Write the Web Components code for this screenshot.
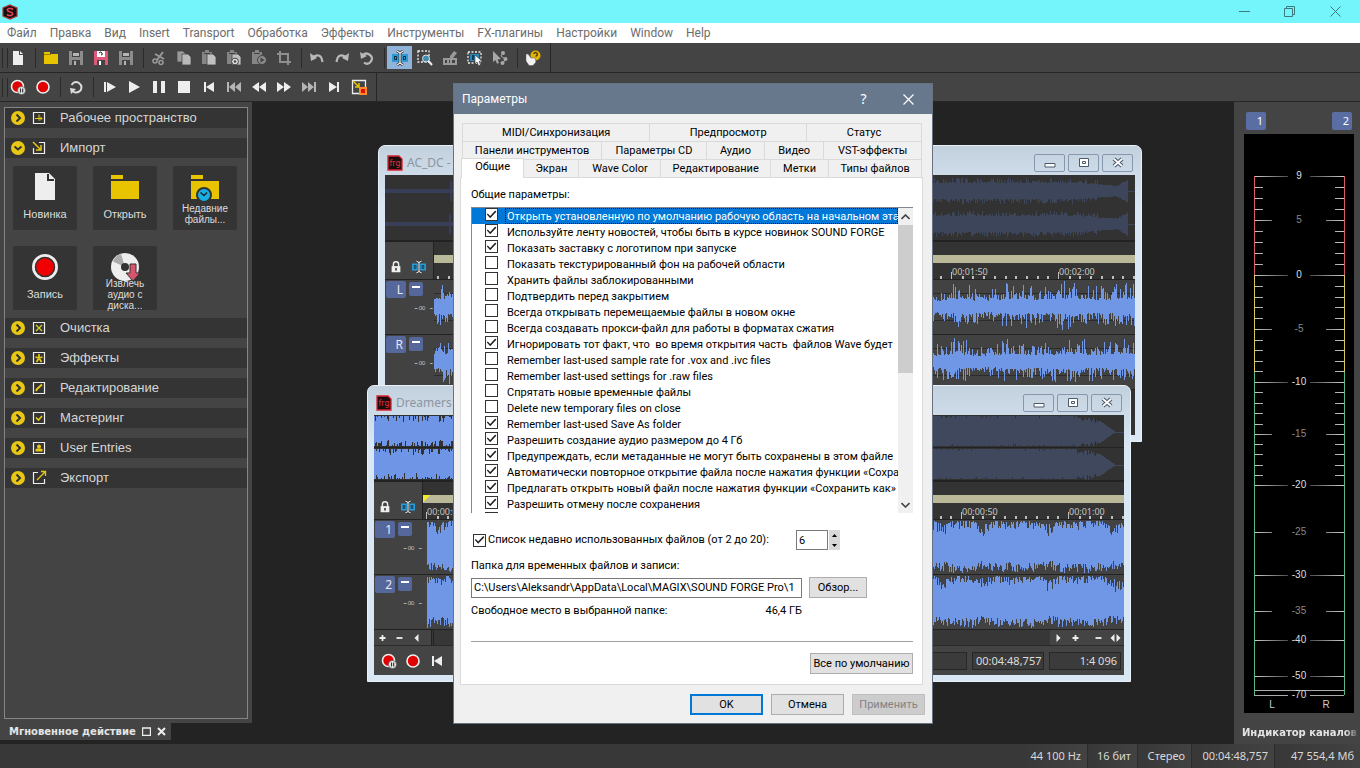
<!DOCTYPE html>
<html lang="ru">
<head>
<meta charset="utf-8">
<title>SOUND FORGE Pro</title>
<style>
  html, body { height: 100%; margin: 0; }
  body { background: #232323; font: 11px/16px "Noto Sans", "Open Sans", sans-serif; overflow: hidden; }
</style>
</head>
<body>
<sf-app></sf-app>
<script>
const UI = '"Noto Sans", "Open Sans", sans-serif';
const DLG = 'Roboto, "Noto Sans", sans-serif';

/* 16x16 glyphs */
const rec = '<circle cx="8" cy="8" r="6" fill="#e00000" stroke="#eee" stroke-width="1.6"/>';
const floppy = (c, d) => `<path fill="${c}" d="M1 1h14v14H1z"/><path fill="#444" d="M4 1h8v6H4zM4 10h8v5H4z"/><path fill="${d}" d="M6 11h2v4H6zM5 3h6v3H5z"/>`;
const sheet = (x, y, c) => `<path fill="${c}" stroke="#444" stroke-width=".8" d="M${x} ${y}h6l3 3v8h-9z"/>`;
const clip = '<path fill="#858585" d="M1 2h3V0h4v2h3v12H1z"/><path fill="#444" d="M3 3h6v1H3z"/>';
const tag = '<path fill="#2b9bd6" d="M0 4h16v8H0z"/><path fill="#10344a" d="M2 6h3v4H2zM11 6h3v4h-3z"/><path fill="#2b9bd6" d="M3 7h1v2H3zM12 7h1v2h-1z"/><path d="M5 1l3 2 3-2M8 2v12M5 15l3-2 3 2" fill="none" stroke="#222" stroke-width="2.6"/><path d="M5 1l3 2 3-2M8 2v12M5 15l3-2 3 2" fill="none" stroke="#f2f2f2" stroke-width="1.3"/>';
const ICONS = {
  app: '<path fill="#141013" stroke="#b33030" stroke-width="1.2" d="M8 1l7 3v8l-7 3-7-3V4z"/><path fill="none" stroke="#e8434c" stroke-width="1.6" d="M11 5.500L9.500 4.500H6.500L5.300 5.700l.7 1.500 4 1.400.7 1.500-1.300 1.400H6.500L5 10.500"/>',
  file: '<path fill="#eee" d="M3 1h7l3 3v11H3z"/><path fill="#444" d="M9 1v4h4V4h-3V1z"/>',
  folder: '<path fill="#e8c400" d="M1 2h6v2h8v10H1z"/><path fill="#9b8300" d="M1 4h7v1H1z"/>',
  save: floppy('#8c8c8c', '#b5b5b5'),
  saveas: floppy('#e0587a', '#fff') + '<path fill="#fff" d="M4 1h8v6H4z"/><path d="M6 3q2-2 3 0t-1 2" fill="none" stroke="#222"/>',
  cut: '<path d="M12 2L6 10M4 4l9 5" stroke="#999" stroke-width="2" fill="none"/><circle cx="4" cy="11" r="2" fill="none" stroke="#999" stroke-width="1.6"/><circle cx="10" cy="12.500" r="2" fill="none" stroke="#999" stroke-width="1.600"/>',
  copy: sheet(1, 1, '#9a9a9a') + sheet(6, 4, '#b9b9b9'),
  paste: clip + sheet(6, 4, '#c0c0c0'),
  pastenew: clip + sheet(6, 4, '#c0c0c0') + '<circle cx="9" cy="11.500" r="3.400" fill="#ddd" stroke="#444"/><circle cx="9" cy="11.500" r="1.200" fill="#444"/>',
  pastemix: clip + '<circle cx="11" cy="10" r="4.500" fill="#8a8a8a" stroke="#444"/><path fill="#444" d="M9.500 7.500l4 2.500-4 2.500z"/>',
  crop: '<path d="M4 1v11h11M1 4h11v11" fill="none" stroke="#8f8f8f" stroke-width="2"/>',
  undo: '<path d="M4 7q8-5 9.500 5" fill="none" stroke="#b9b9b9" stroke-width="2.200"/><path fill="#b9b9b9" d="M1 3l1 8 6-3z"/>',
  redo: '<path d="M12 7Q4 2 2.500 12" fill="none" stroke="#b9b9b9" stroke-width="2.200"/><path fill="#b9b9b9" d="M15 3l-1 8-6-3z"/>',
  again: '<path d="M4 5q3-3 7 0t0 7.500q-3 2.500-6 0" fill="none" stroke="#b9b9b9" stroke-width="2.200"/><path fill="#b9b9b9" d="M1 2l1 7 6-3z"/>',
  edit: tag,
  zoom: '<path d="M1 1h11v11H1z" fill="none" stroke="#eee" stroke-width="1.300" stroke-dasharray="2 1.500"/><circle cx="9" cy="8.500" r="3.500" fill="#3f8fb5" stroke="#ddd"/><path d="M11.500 11l3.500 4" stroke="#eee" stroke-width="2"/>',
  pencil: '<path fill="#999" d="M1 8h14v7H1zM8 6l4-5 3 2-4 5-3 1z"/><path fill="#444" d="M3 10h2v3H3zM7 10h1v3H7zM10 10h3v3h-3z"/>',
  event: '<path d="M1 2h13v11H1z" fill="none" stroke="#eee" stroke-width="1.300" stroke-dasharray="2 1.500"/><path fill="#2c86b4" d="M3 4h9v7H3z"/><path fill="#173c52" d="M5 5h2v5H5z"/><path fill="#fff" stroke="#333" stroke-width=".6" d="M8 5l7 6-3 .4 1.500 3.600-2 .8L10 12l-2 2z"/>',
  env: '<path fill="#a8a8a8" d="M1 1l8 8-3.500.4L7 13l-2 .8L3.500 10 1 12z"/><path d="M11 3l-2 3 4 3-2 5" stroke="#a8a8a8" fill="none"/><circle cx="11" cy="3" r="2" fill="#a8a8a8"/><circle cx="13.500" cy="9" r="2" fill="#a8a8a8"/><circle cx="10.500" cy="13" r="2" fill="#a8a8a8"/>',
  help: '<circle cx="10.500" cy="5.500" r="5" fill="#e3b500"/><path d="M8.500 4q2-3 4 0-.5 2-2 2.500" fill="none" stroke="#4a3a00" stroke-width="1.300"/><path fill="#f2f2f2" stroke="#555" stroke-width=".5" d="M1 4l2 0 3 4 4 0 1 4-3 3.500H4L1 11z"/>',
  recpause: '<circle cx="7.500" cy="7.500" r="6" fill="#e00000" stroke="#eee" stroke-width="1.600"/><circle cx="11.500" cy="11.500" r="4" fill="#eee" stroke="#444" stroke-width=".6"/><path d="M10.500 9.500v4M12.700 9.500v4" stroke="#333" stroke-width="1.200"/>',
  record: rec,
  loop: '<path d="M5 12.500Q9 15 12.500 11.500 15 7 11 4 6.500 1.500 3.500 6" fill="none" stroke="#ddd" stroke-width="1.900"/><path fill="#ddd" d="M2 9l6 1-5 5z"/>',
  playall: '<path fill="#eee" d="M3 3h2v10H3zM6 3l9 5-9 5z"/>',
  play: '<path fill="#eee" d="M3 2l11 6-11 6z"/>',
  pause: '<path fill="#eee" d="M2 2h4v12H2zM10 2h4v12h-4z"/>',
  stop: '<path fill="#eee" d="M2 2h12v12H2z"/>',
  start: '<path fill="#eee" d="M3 3h2v10H3zM13 3v10L5 8z"/>',
  prev: '<path fill="#b5b5b5" d="M1 3h2v10H1zM9 3v10L3 8zM15 3v10L9 8z"/>',
  rew: '<path fill="#eee" d="M8 3v10L1 8zM15 3v10L8 8z"/>',
  ff: '<path fill="#eee" d="M1 3v10l7-5zM8 3v10l7-5z"/>',
  next: '<path fill="#b5b5b5" d="M1 3v10l6-5zM7 3v10l6-5zM13 3h2v10h-2z"/>',
  end: '<path fill="#eee" d="M3 3v10l8-5zM11 3h2v10h-2z"/>',
  goto: '<path d="M1.500 1.500h13v13h-13z" fill="none" stroke="#eee" stroke-width="1.300"/><path fill="#ff8c2a" d="M8 8h8v8H8z"/><path fill="#e01010" d="M10 10h4v4h-4z"/><path d="M2 2l6 6M8 4v4H4" fill="none" stroke="#e8c400" stroke-width="1.500"/>',
  right: '<circle cx="8" cy="8" r="7" fill="#e8c814"/><path d="M6.500 4.500L10 8l-3.500 3.500" fill="none" stroke="#333" stroke-width="2"/>',
  down: '<circle cx="8" cy="8" r="7" fill="#e8c814"/><path d="M4.500 6.500L8 9.500l3.500-3" fill="none" stroke="#333" stroke-width="2"/>',
  lock: '<path fill="#eee" d="M3 7h10v7H3z"/><path d="M5 8V5q0-3 3-3t3 3v3" fill="none" stroke="#eee" stroke-width="1.600"/><path fill="#444" d="M7 9h2v3H7z"/>',
  frg: '<path fill="#1a0c0c" stroke="#d8232f" stroke-width="1.300" d="M1 1h11l3 3v11H1z"/><text x="8" y="11" text-anchor="middle" font-family="DejaVu Sans, sans-serif" font-size="8" fill="#e03038">frg</text>',
  min: '<path fill="#fff" stroke="#4d5a6c" d="M3 8.500h10v3.500H3z"/>',
  max: '<path fill="#fff" stroke="#4d5a6c" d="M3.500 3.500h9v8h-9zM6.500 6.500h3v2h-3z"/>',
  x: '<path d="M4 4l8 7M12 4l-8 7" stroke="#4d5a6c" stroke-width="4"/><path d="M4 4l8 7M12 4l-8 7" stroke="#fff" stroke-width="1.800"/>',
  plus: '<path d="M8 5v6M5 8h6" stroke="#eee" stroke-width="1.800"/>',
  minus: '<path d="M5 8h6" stroke="#eee" stroke-width="1.800"/>',
  tril: '<path fill="#eee" d="M10 4v8L6 8z"/>',
  trir: '<path fill="#eee" d="M6 4v8l4-4z"/>',
  trilr: '<path fill="#eee" d="M7 4v8L3 8zM9 4v8l4-4z"/>',
};
const box = '<path d="M2.500 2.500h11v11h-11z" fill="none" stroke="#eee" stroke-width="1.200"/>';
Object.assign(ICONS, {
  gWork: box + '<path d="M8 4.500v6M4 8.500h7M9 6.500l2 2-2 2" fill="none" stroke="#e8c814"/>',
  gImport: '<path d="M8 2.500h5.500v11h-11V8" fill="none" stroke="#eee" stroke-width="1.200"/><path d="M2 2l8 8M10 5v5H5" fill="none" stroke="#e8c814" stroke-width="1.500"/>',
  gClean: box + '<path d="M5 5l6 6M11 5l-6 6" stroke="#d5cf2a" stroke-width="1.300"/>',
  gFx: box + '<path d="M8 4v4M4.500 7L8 8l3.500-1M5.500 12L8 8l2.500 4" stroke="#e8c814" stroke-width="1.700" fill="none"/>',
  gEdit: box + '<path d="M5 11l1-2 5-4.500" stroke="#e8c814" stroke-width="2" fill="none"/>',
  gMaster: box + '<path d="M5 7.500L7.500 10 11 6" stroke="#e8c814" stroke-width="1.600" fill="none"/>',
  gUser: box + '<circle cx="8" cy="6.500" r="2" fill="#e8c814"/><path fill="#e8c814" d="M4.500 9q3.500-1.500 7 0v2.500h-7z"/>',
  gExport: '<path d="M7 2.500H2.500v11h11V9" fill="none" stroke="#eee" stroke-width="1.200"/><path d="M6 10l8-8M10 1.500h4.500V6" fill="none" stroke="#e8c814" stroke-width="1.300"/>',
});

function define(name, css, html) {
  customElements.define(name, class extends HTMLElement {
    connectedCallback() {
      if (this.shadowRoot) return;
      const root = this.attachShadow({ mode: 'open' });
      const t = document.createElement('template');
      t.innerHTML = `<style>*{box-sizing:border-box}${css}</style>` + (typeof html === 'function' ? html(this) : html);
      root.append(t.content.cloneNode(true));
    }
  });
}
const a = (el, n, d = '') => el.getAttribute(n) ?? d;
const BTN = 'button{font:inherit;color:inherit;border:0;margin:0;padding:0;background:none}';

define('ui-icon', ':host{display:inline-block;width:16px;height:16px;flex:none}svg{display:block;width:100%;height:100%}',
  el => `<svg viewBox="0 0 16 16" aria-hidden="true">${ICONS[a(el, 'name')]}</svg>`);

/* ---------- title, menu, toolbars ---------- */
define('title-bar', `:host{display:flex;align-items:center;height:23px;background:#74f5fb;padding:0 14px 0 2px}${BTN}
  .sp{flex:1}.b{width:45px;height:20px;display:grid;place-items:center}.b:last-child{width:22px;margin-left:12px}svg{width:11px;height:11px}`,
  `<ui-icon name="app"></ui-icon><span class="sp"></span>
  <button class="b" aria-label="Свернуть"><svg viewBox="0 0 11 11"><path d="M0 5.500h11" stroke="#3c7a7d"/></svg></button>
  <button class="b" aria-label="Развернуть"><svg viewBox="0 0 11 11"><path d="M.5 2.500h8v8h-8zM2.500 2V.5h8v8H9" fill="none" stroke="#3c7a7d"/></svg></button>
  <button class="b" aria-label="Закрыть"><svg viewBox="0 0 11 11"><path d="M.5.5l10 10M10.500.5l-10 10" stroke="#3c7a7d"/></svg></button>`);

define('menu-bar', `:host{display:block;height:20px;background:#fff}nav{display:flex;gap:13px;padding-left:7px}
  a{color:#6d6d6d;text-decoration:none;font:12px/20px ${DLG};white-space:nowrap}`,
  '<nav>' + ['Файл','Правка','Вид','Insert','Transport','Обработка','Эффекты','Инструменты','FX-плагины','Настройки','Window','Help'].map(t => `<a href="#">${t}</a>`).join('') + '</nav>');

define('tool-bar', `:host{display:flex;background:#444;border-bottom:1px solid #272727}
  .bar{display:flex;align-items:center;height:100%;padding:0 5px;border-right:1px solid #272727;position:relative}
  .bar::before{content:"";position:absolute;left:2px;top:5px;bottom:4px;width:4px;border:solid #2a2a2a;border-width:0 1px;}
  ${BTN}button{width:25px;height:23px;display:grid;place-items:center}button.on{background:#8fb3d9}
  i{width:8px;height:20px;flex:none;background:linear-gradient(#2a2a2a,#2a2a2a) 5px 0/1px 100% no-repeat}`,
  el => '<div class="bar" role="toolbar">' + a(el, 'items').split(' ').map(n => n === '|' ? '<i></i>' : `<button class="${n === a(el, 'active') ? 'on' : ''}" aria-label="${n}"><ui-icon name="${n}"></ui-icon></button>`).join('') + '</div>');

/* ---------- left panel ---------- */
define('action-group', `:host{display:block;margin-bottom:10px}:host([open]){margin-bottom:8px}${BTN}
  button{display:flex;align-items:center;width:100%;height:20px;padding:0 5px;background:#343434;color:#d6d6d6;font:13px/20px "Liberation Sans",Arial,sans-serif;text-align:left}
  ui-icon+ui-icon{margin:0 13px 0 5px}.l{white-space:nowrap}
  ::slotted(div){padding-top:8px}`,
  el => `<button aria-expanded="${el.hasAttribute('open')}"><ui-icon name="${el.hasAttribute('open') ? 'down' : 'right'}"></ui-icon><ui-icon name="${a(el, 'icon')}"></ui-icon><span class="l">${a(el, 'label')}</span></button><slot></slot>`);

const BIG = {
  file: '<path fill="#eee" d="M5 1h14l6 6v21H5z"/><path d="M18 2v6h6" fill="none" stroke="#333" stroke-width="2"/>',
  folder: '<path fill="#e8c400" d="M1 3h12v4H1zM1 9h28v18H1z"/>',
  recent: '<path fill="#e8c400" d="M1 3h12v4H1zM1 9h28v18H1z"/><circle cx="14" cy="23" r="7" fill="#18aee6" stroke="#333" stroke-width="2"/><path d="M10.500 20.500l3.500 3 3-3" fill="none" stroke="#222" stroke-width="1.500"/>',
  record: '<circle cx="15" cy="15" r="11.500" fill="#f00000" stroke="#eee" stroke-width="3"/><circle cx="15" cy="15" r="9.500" fill="none" stroke="#333" stroke-width="1.500"/>',
  cd: '<circle cx="15" cy="15" r="14" fill="#eee"/><path fill="#aaa" d="M15 15L3 9.500Q5 4 11 2z"/><circle cx="15" cy="15" r="4" fill="#333"/><path fill="#d9556e" stroke="#333" d="M20 12h6v9h4l-7 8-7-8h4z"/>',
};
define('action-card', `:host{display:block}${BTN}
  button{display:flex;flex-direction:column;align-items:center;width:64px;height:64px;background:#343434;color:#ddd;border-radius:2px;padding-top:6px;font:11px/14px "Liberation Sans",Arial,sans-serif}
  svg{width:30px;height:30px;flex:none}span{margin-top:5px}
  .s{font-size:10px;line-height:11px}.s span{margin-top:1px}.t span{margin-top:-4px;line-height:11px}`,
  el => `<button class="${a(el, 'size')}"><svg viewBox="0 0 30 30" aria-hidden="true">${BIG[a(el, 'icon')]}</svg><span><slot></slot></span></button>`);

define('quick-actions', `:host{display:flex;flex-direction:column;align-items:flex-start;width:252px;flex:none;background:#232323}
  .p{align-self:stretch;flex:1;background:#444;padding:5px 4px 4px}
  .box{height:100%;border:1px solid #858585}
  .cards{display:grid;grid-template-columns:64px 64px 64px;gap:16px;padding-left:8px}
  .tab{display:flex;align-items:center;gap:6px;height:17px;padding:0 5px 0 9px;background:#444;color:#e4e4e4;font:bold 10px/17px "DejaVu Sans",sans-serif;white-space:nowrap;margin-bottom:4px}
  ${BTN}button{width:9px;height:9px}svg{display:block;width:9px;height:9px}`,
  `<div class="p"><div class="box">
    <action-group icon="gWork" label="Рабочее пространство"></action-group>
    <action-group icon="gImport" label="Импорт" open><div class="cards">
      <action-card icon="file">Новинка</action-card><action-card icon="folder">Открыть</action-card>
      <action-card icon="recent" size="s">Недавние<br>файлы...</action-card>
      <action-card icon="record">Запись</action-card>
      <action-card icon="cd" size="s t">Извлечь<br>аудио с<br>диска...</action-card></div></action-group>
    <action-group icon="gClean" label="Очистка"></action-group>
    <action-group icon="gFx" label="Эффекты"></action-group>
    <action-group icon="gEdit" label="Редактирование"></action-group>
    <action-group icon="gMaster" label="Мастеринг"></action-group>
    <action-group icon="gUser" label="User Entries"></action-group>
    <action-group icon="gExport" label="Экспорт"></action-group>
  </div></div>
  <div class="tab"><span>Мгновенное действие</span><button aria-label="Развернуть"><svg viewBox="0 0 9 9"><path d="M.5 1h8v7.500h-8z" fill="none" stroke="#eee" stroke-width="1.400"/></svg></button><button aria-label="Закрыть"><svg viewBox="0 0 9 9"><path d="M1 1l7 7M8 1L1 8" stroke="#eee" stroke-width="2"/></svg></button></div>`);

/* ---------- waveforms ---------- */
function rng(seed) { return () => ((seed = (seed * 1664525 + 1013904223) >>> 0) / 4294967296); }
const SHAPES = {
  /* dense band around the centre line */
  band(x, r, h) { const c = h / 2, m = 1 + .12 * Math.sin(x / 9) + .08 * Math.sin(x / 31), v = r(), w = r();
    return [c - (7 + 13 * v * v * v + 3 * v) * m, c + (6 + 10 * w * w * w + 4 * w) * m]; },
  /* nearly clipped signal with ragged edges */
  full(x, r, h) { const d = Math.max(0, Math.sin(x / 23) * Math.sin(x / 7)) * 7, v = r(), w = r();
    return [1 + v * v * 8 + d * (.4 + v), h - 1 - w * 10 - d * .5]; },
  /* overview strips */
  loud(x, r, h, W) { const e = W - 47; if (x < e) { const v = r(), w = r(), k = x < 200 ? .55 : .85; return [1 + (v > k ? (v - k) * 14 : 0), h - 1 - (w > k ? (w - k) * 14 : 0)]; }
    const t = Math.max(0, 1 - (x - e) / 40), c = h / 2 + 1, j = r() * 5 * (x - e < 22 ? 1 : 0), k = Math.max(.5, Math.min(1, t * 1.7) * (h / 2) - 1 - j); return [c - k, c + k]; },
  soft(x, r, h, W) { const c = h / 2, v = r(), w = r(); if (x < 120) return [c - 2 - (x > 60 && v > .8 ? 8 : 0), c + 2 + (x > 60 && v > .8 ? 8 : 0)];
    const e = W - 8, s = e - x; if (s < 0) return [c, c + 1];
    const m = s < 10 ? 11 - s * .6 : s < 45 ? 5 + (s - 10) / 14 : 8, n = s < 30 ? 1 : 5;
    return [c - m - v * v * n, c + m + w * w * n]; },
};
define('wave-view', ':host{display:block;overflow:hidden;min-width:0}svg{display:block}', el => {
  const W = +a(el, 'w', 702), H = +a(el, 'h', 54), r = rng(+a(el, 'seed', 7)), s = SHAPES[a(el, 'shape')], x0 = +a(el, 'from', 0), split = +a(el, 'split', 0);
  let p = '', q = '';
  for (let x = x0; x < W; x++) { const [t, b] = s(x, r, H, W), d = `M${x + .5} ${Math.round(t)}V${Math.round(b)}`; if (x < split) q += d; else p += d; }
  const g = el.hasAttribute('guides') ? `<path d="M0 ${H / 2 - 13.500}h${W}M0 ${H / 2 + 13.500}h${W}" stroke="#2c2c2c"/>` : '';
  return `<svg width="${W}" height="${H}" shape-rendering="crispEdges" aria-hidden="true">${g}<path d="${p}" stroke="${a(el, 'color', '#7096e6')}"/><path d="${q}" stroke="${a(el, 'color2', '#6f96e6')}"/></svg>`;
});

define('time-ruler', ':host{display:block;overflow:hidden;min-width:0}svg{display:block}', el => {
  const o = +a(el, 'origin'), shown = a(el, 'labels').split(' '), step = 10.7; let m = '';
  for (let i = -66; i < 67; i++) { const x = Math.round(o + i * step), big = i % 10 === 0; if (x < 0 || x > 702) continue;
    m += `<path d="M${x + .5} ${big ? 9 : 13}v${big ? 7 : 3}" stroke="#bdbdbd" stroke-width="${big ? 1 : 2}"/>`;
    const l = big && shown.find(s => +s.split('@')[0] === i);
    if (l) m += `<text x="${x + 1}" y="12">${l.split('@')[1]}</text>`; }
  return `<svg width="702" height="16" font-family="Noto Sans, sans-serif" font-size="9" fill="#c8c8c0" shape-rendering="crispEdges">${m}</svg>`;
});

define('audio-track', `:host{display:grid;grid-template-columns:49px minmax(0,1fr);height:55px;background:#424242;border-bottom:1px solid #222;overflow:hidden}
  .h{display:grid;grid-template-columns:20px 14px;gap:0 3px;align-content:start;padding:1px;color:#e8e8f0}
  b{font:12px/17px ${UI};height:17px;background:#56679c;border-radius:2px;text-align:right;padding-right:3px}
  i{height:14px;background:#56679c;border-radius:2px;margin-top:1px;background-image:linear-gradient(#fff,#fff);background-size:8px 2px;background-position:3px 4px;background-repeat:no-repeat}
  span{grid-column:1/3;text-align:right;font:10px/12px "DejaVu Sans",sans-serif;margin:4px -10px 0 0;color:#bbb}`,
  el => `<div class="h"><b>${a(el, 'label')}</b><i></i><span>-∞ -</span></div><wave-view shape="${a(el, 'shape')}" seed="${a(el, 'seed')}" from="${a(el, 'from', 0)}" h="54" ${a(el, 'shape') === 'band' ? 'guides' : ''}></wave-view>`);

define('mdi-window', `:host{display:flex;flex-direction:column;position:absolute;background:linear-gradient(#c3d0de,#d9e6f3 60px);border:1px solid #e9f1f8;border-radius:7px 7px 0 0;padding:0 6px 6px}
  header{display:flex;align-items:center;height:29px;padding:5px 2px 0 2px;gap:3px;flex:none}
  h2{flex:1;margin:0;font:12px/18px ${UI};color:#8c96a2;padding-left:1px;white-space:nowrap}
  ${BTN}button{width:31px;height:18px;border:1px solid #8797ad;border-radius:2px;display:grid;place-items:center}
  main{flex:1;min-height:0;overflow:hidden;background:#333}`,
  el => `<header><ui-icon name="frg"></ui-icon><h2>${a(el, 'label')}</h2><button aria-label="Свернуть"><ui-icon name="min"></ui-icon></button><button aria-label="Развернуть"><ui-icon name="max"></ui-icon></button><button aria-label="Закрыть"><ui-icon name="x"></ui-icon></button></header><main><slot></slot></main>`);

define('wave-editor', `:host{display:block}
  .ov{height:67px;background:#323232;border-bottom:2px solid #222}.ov wave-view+wave-view{border-top:1px solid #222}.soft wave-view+wave-view{border-color:transparent}
  .r{display:grid;grid-template-columns:49px minmax(0,1fr);height:38px;border-bottom:1px solid #222}
  .c{display:flex;align-items:flex-end;justify-content:space-between;padding:0 7px 5px 4px;background:#444;border-right:1px solid #222}
  .c ui-icon{width:14px;height:14px}.t{padding-top:13px}.bar{height:8px;background:#b9b99a}
  .m .bar{background:linear-gradient(135deg,#f2ea2c 5px,transparent 5px) no-repeat,#b9b99a}`,
  el => { const k = a(el, 'kind'), o = k === 'soft' ? 'color="#3c455a" color2="#383d58" split="80"' : 'color="#3f485c" color2="#6f96e6" split="330"';
    return `<div class="ov ${k}"><wave-view shape="${k}" w="750" h="32" seed="3" ${o}></wave-view><wave-view shape="${k}" w="750" h="32" seed="11" ${o}></wave-view></div>
    <div class="r"><div class="c"><ui-icon name="lock"></ui-icon><ui-icon name="edit"></ui-icon></div><div class="t ${k === 'loud' ? 'm' : ''}"><div class="bar"></div><time-ruler origin="${a(el, 'origin')}" labels="${a(el, 'labels')}"></time-ruler></div></div><slot></slot>`; });

define('transport-strip', `:host{display:block;background:#444}
  .s{display:flex;align-items:center;height:16px;border-bottom:1px solid #2a2a2a}.s i{flex:1;height:100%;background:#373737;border-left:3px double #222;margin-left:6px}
  .s ui-icon{width:17px;height:16px}.s .g{margin-left:6px}
  .t{display:flex;align-items:center;height:29px;padding:0 3px 0 7px;gap:8px}.t span{flex:1}
  output{width:72px;height:18px;border:1px solid #272727;background:#3b3b3b;color:#ddd;text-align:right;padding:0 3px;line-height:16px;margin-right:-3px}
  output:last-child{margin-right:0}`,
  `<div class="s"><ui-icon name="plus"></ui-icon><ui-icon name="minus"></ui-icon><ui-icon name="tril"></ui-icon><i></i><ui-icon name="trir"></ui-icon><ui-icon name="plus"></ui-icon><ui-icon class="g" name="minus"></ui-icon><ui-icon name="trilr"></ui-icon></div>
  <div class="t"><ui-icon name="recpause"></ui-icon><ui-icon name="record"></ui-icon><ui-icon name="start"></ui-icon><span></span><output></output><output>00:04:48,757</output><output>1:4 096</output></div>`);

define('work-area', `:host{display:block;flex:1;position:relative;overflow:hidden;background:#232323;min-width:0}
  .w1{left:126px;top:43px;width:764px;height:297px}.w2{left:115px;top:283px;width:764px;height:297px}`,
  `<mdi-window class="w1" label="AC_DC -"><wave-editor kind="soft" origin="624" labels="-10@00:01:50 0@00:02:00"><audio-track label="L" shape="band" seed="21"></audio-track><audio-track label="R" shape="band" seed="77"></audio-track></wave-editor></mdi-window>
  <mdi-window class="w2" label="Dreamers ("><wave-editor kind="loud" origin="538" labels="-50@00:00:00 0@00:00:50 10@00:01:00"><audio-track label="1" shape="full" seed="5" from="4"></audio-track><audio-track label="2" shape="full" seed="19" from="4"></audio-track></wave-editor><transport-strip></transport-strip></mdi-window>`);

/* ---------- level meter ---------- */
define('level-meter', `:host{display:flex;flex-direction:column;width:126px;flex:none;background:#444;overflow:hidden}
  .top{display:flex;justify-content:space-between;padding:10px 8px 4px 12px}
  .top b{width:20px;height:18px;background:#5a6ea4;border-radius:2px;color:#fff;font:11px/18px ${UI};text-align:right;padding-right:3px}
  svg{display:block;margin-left:10px;background:#000}
  .n{height:17px;margin-top:11px;padding-left:8px;font:bold 10px/17px "DejaVu Sans",sans-serif;color:#e4e4e4;white-space:nowrap;-webkit-mask-image:linear-gradient(90deg,#000 88%,transparent)}`,
  () => {
    const K = [[9,42],[5,86],[0,141],[-5,195],[-10,248],[-15,300],[-20,351],[-25,398],[-30,441],[-35,477],[-40,506],[-50,542],[-60,556],[-70,561]];
    const y = v => { for (let i = 0; i < K.length - 1; i++) { const [p, q] = K[i], [s, t] = K[i + 1]; if (v <= p && v >= s) return Math.round(q + (p - v) / (p - s) * (t - q)); } };
    let m = '';
    const tick = (v, w) => m += `<path d="M10 ${y(v)}.5h${w}" stroke="url(#l)"/><path d="M100 ${y(v)}.5h-${w}" stroke="url(#r)"/>`;
    for (let v = 8; v > -20; v--) if (v % 5) tick(v, 9);
    for (const [v] of K) { if (v === -60 || v === -70) { m += `<path d="M10 ${y(v)}.5h${v === -60 ? 90 : 34}M100 ${y(v)}.5h-34" stroke="#aaa"/>`; } else tick(v, v % 10 && v !== 9 ? 18 : 34);
      if (v !== -60) m += `<text x="55" y="${y(v) + 3}" fill="${v % 10 && v !== 9 ? '#888' : '#ddd'}">${v}</text>`; }
    return `<div class="top"><b>1</b><b>2</b></div>
    <svg width="110" height="579" font-family="Liberation Sans, sans-serif" font-size="10" text-anchor="middle">
    <defs><linearGradient id="l" gradientUnits="userSpaceOnUse" x1="10" x2="46"><stop stop-color="#ccc"/><stop offset="1" stop-color="#444"/></linearGradient><linearGradient id="r" gradientUnits="userSpaceOnUse" x1="100" x2="64"><stop stop-color="#ccc"/><stop offset="1" stop-color="#444"/></linearGradient></defs>
    ${m}<path d="M10.500 42v99M100.500 42v99" stroke="#d85c68"/><path d="M10.500 141v97M100.500 141v97" stroke="#dcc85a"/><path d="M10.500 238v323M100.500 238v323" stroke="#55b88a"/>
    <text x="28" y="574" fill="#ccc">L</text><text x="82" y="574" fill="#ccc">R</text></svg><div class="n">Индикатор каналов</div>`;
  });

define('status-bar', `:host{display:flex;justify-content:flex-end;height:24px;background:#383838;gap:3px;flex:none}
  span{background:linear-gradient(90deg,#383838,#424242);color:#d8d8d8;text-align:right;padding:0 6px;line-height:24px;white-space:nowrap;border-right:1px solid #2c2c2c}
  span:nth-of-type(1){min-width:66px}span:nth-of-type(2){min-width:43px}span:nth-of-type(3){min-width:51px}span:nth-of-type(4){min-width:80px}span:nth-of-type(5){min-width:82px;border:0}`,
  '<span>44 100 Hz</span><span>16 бит</span><span>Стерео</span><span>00:04:48,757</span><span>47 554,4 Мб</span>');

/* ---------- preferences dialog ---------- */
const CHECK = `input[type=checkbox]{appearance:none;width:13px;height:13px;margin:0;border:1px solid #333;background:#fff;flex:none;display:grid}
  input:checked::after{content:"";background:#222;clip-path:polygon(8% 50%,16% 40%,38% 64%,84% 14%,94% 24%,38% 84%)}`;
define('option-list', `:host{display:flex;height:306px;border:solid #828790;border-width:1px 0 0 1px;color:#000}
  ul{flex:1;min-width:0;margin:0;padding:0;list-style:none;overflow:hidden}
  label{display:flex;height:16px;align-items:flex-start;white-space:nowrap}
  ${CHECK}input{margin:0 7px 0 13px!important}
  span{line-height:18px;padding:0 2px;height:16px}
  .sel label{background:#0078d7;color:#fff}.sel span{outline:1px dotted #111;outline-offset:-1px;flex:1;overflow:hidden}
  .sb{display:flex;flex-direction:column;width:15px;background:#f0f0f0}.sb i{height:148px;background:#cdcdcd}.sb b{flex:1}
  ${BTN}.sb button{height:17px;display:grid;place-items:center}svg{width:9px;height:6px}`,
  () => { const rows = ['1Открыть установленную по умолчанию рабочую область на начальном эта','1Используйте ленту новостей, чтобы быть в курсе новинок SOUND FORGE','1Показать заставку с логотипом при запуске','0Показать текстурированный фон на рабочей области','0Хранить файлы заблокированными','0Подтвердить перед закрытием','0Всегда открывать перемещаемые файлы в новом окне','0Всегда создавать прокси-файл для работы в форматах сжатия','1Игнорировать тот факт, что&nbsp; во время открытия часть&nbsp; файлов Wave будет','0Remember last-used sample rate for .vox and .ivc files','0Remember last-used settings for .raw files','0Спрятать новые временные файлы','0Delete new temporary files on close','1Remember last-used Save As folder','1Разрешить создание аудио размером до 4 Гб','1Предупреждать, если метаданные не могут быть сохранены в этом файле','1Автоматически повторное открытие файла после нажатия функции «Сохра','1Предлагать открыть новый файл после нажатия функции «Сохранить как»','1Разрешить отмену после сохранения','0'];
    return '<ul>' + rows.map((r, i) => `<li class="${i ? '' : 'sel'}"><label><input type="checkbox" ${+r[0] ? 'checked' : ''}><span>${r.slice(1)}</span></label></li>`).join('') +
    '</ul><div class="sb"><button aria-label="Вверх"><svg viewBox="0 0 9 6"><path d="M.5 5l4-4 4 4" fill="none" stroke="#444" stroke-width="1.600"/></svg></button><i></i><b></b><button aria-label="Вниз"><svg viewBox="0 0 9 6"><path d="M.5 1l4 4 4-4" fill="none" stroke="#444" stroke-width="1.600"/></svg></button></div>'; });

const TABS = [[['MIDI/Синхронизация',188],['Предпросмотр',157],['Статус',115]],[['Панели инструментов',140],['Параметры CD',105],['Аудио',58],['Видео',59],['VST-эффекты',98]],[['Общие',62],['Экран',55],['Wave Color',82],['Редактирование',110],['Метки',58],['Типы файлов',93]]];
define('prefs-dialog', `:host{display:flex;flex-direction:column;position:absolute;left:453px;top:83px;width:480px;background:#f0f0f0;border:1px solid #66727f;color:#000;font:11px/16px ${DLG}}
  ${BTN}${CHECK}
  header{display:flex;align-items:center;height:30px;background:#68788c;color:#fff;padding:0 10px 0 8px}
  h1{flex:1;margin:0;font:12px/30px ${DLG}}header button{width:27px;height:28px;font:14px/28px ${UI};display:grid;place-items:center}header button+button{margin-left:18px}header svg{width:11px;height:11px}
  .tabs{margin:9px 10px 0 8px}.row{display:flex;height:18px}.row button{flex:1 1 0;min-width:0;border:solid #dadada;border-width:1px 1px 0 0;line-height:18px;white-space:nowrap}
  .row button:first-child{border-left-width:1px}
  .row .cur{background:#fff;margin:-1px 0 -1px -1px;padding-bottom:3px;position:relative;line-height:16px}
  .page{margin:0 9px 0 6px;border:1px solid #dadada;background:#fff;padding:9px 9px 10px 10px;display:flex;flex-direction:column}
  option-list{margin:4px 0 17px}
  .f{display:flex;align-items:center}.rec{height:20px;margin-bottom:8px;gap:1px;padding-left:2px}.rec label{width:308px;white-space:nowrap;padding-left:1px}
  input[type=text]{font:inherit;border:1px solid #7a7a7a;background:#fff;padding:0 2px;height:20px;margin:0;color:#000;border-radius:0;outline:0}
  .num{width:32px}.spin{display:flex;flex-direction:column;width:11px;height:20px;background:#d8d8d8}.spin button{flex:1;display:grid;place-items:center}.spin svg{width:5px;height:3px;display:block}
  .path{margin:3px 0 5px;gap:7px;height:21px}.path input{width:331px}
  .b{height:21px;background:#e1e1e1;border:1px solid #adadad;line-height:19px;text-align:center}
  .free{justify-content:space-between;width:331px}
  hr{border:0;height:1px;background:#a0a0a0;margin:22px 0 11px;width:100%}
  .all{align-self:flex-end;width:103px}.look{width:58px}
  footer{display:flex;justify-content:flex-end;gap:8px;padding:9px 7px 8px}footer .b{width:73px}
  .ok{border:2px solid #0078d7;line-height:17px}.b:disabled{background:#ccc;border-color:#bfbfbf;color:#838383}`,
  `<header><h1>Параметры</h1><button aria-label="Справка">?</button><button aria-label="Закрыть"><svg viewBox="0 0 11 11"><path d="M.5.5l10 10M10.500.5l-10 10" stroke="#fff" stroke-width="1.200"/></svg></button></header>
  <div class="tabs" role="tablist">${TABS.map(r => '<div class="row">' + r.map(([t, w]) => `<button role="tab" class="${t === 'Общие' ? 'cur' : ''}" style="flex-grow:${w}">${t}</button>`).join('') + '</div>').join('')}</div>
  <section class="page" role="tabpanel"><div>Общие параметры:</div><option-list></option-list>
  <div class="f rec"><input type="checkbox" id="recent" checked><label for="recent">Список недавно использованных файлов (от 2 до 20):</label><input class="num" type="text" value="6" aria-label="Количество файлов"><div class="spin"><button aria-label="Больше"><svg viewBox="0 0 5 3"><path d="M0 3h5L2.500 0z"/></svg></button><button aria-label="Меньше"><svg viewBox="0 0 5 3"><path d="M0 0h5L2.500 3z"/></svg></button></div></div>
  <label for="path">Папка для временных файлов и записи:</label>
  <div class="f path"><input id="path" type="text" value="C:\\Users\\Aleksandr\\AppData\\Local\\MAGIX\\SOUND FORGE Pro\\1"><button class="b look">Обзор...</button></div>
  <div class="f free"><span>Свободное место в выбранной папке:</span><span>46,4 ГБ</span></div><hr><button class="b all">Все по умолчанию</button></section>
  <footer><button class="b ok">OK</button><button class="b">Отмена</button><button class="b" disabled>Применить</button></footer>`);

define('sf-app', `:host{display:flex;flex-direction:column;height:100%;position:relative}
  tool-bar.a{height:30px}tool-bar.b{height:29px}.work{display:flex;flex:1;min-height:0}`,
  `<title-bar></title-bar><menu-bar></menu-bar>
  <tool-bar class="a" active="edit" items="file | folder save saveas save | cut copy paste pastenew pastemix crop | undo redo again | edit zoom pencil event env | help"></tool-bar>
  <tool-bar class="b" items="recpause record | loop | playall play pause stop start prev rew ff next end goto"></tool-bar>
  <div class="work"><quick-actions></quick-actions><work-area></work-area><level-meter></level-meter></div>
  <status-bar></status-bar><prefs-dialog></prefs-dialog>`);
</script>
</body>
</html>
